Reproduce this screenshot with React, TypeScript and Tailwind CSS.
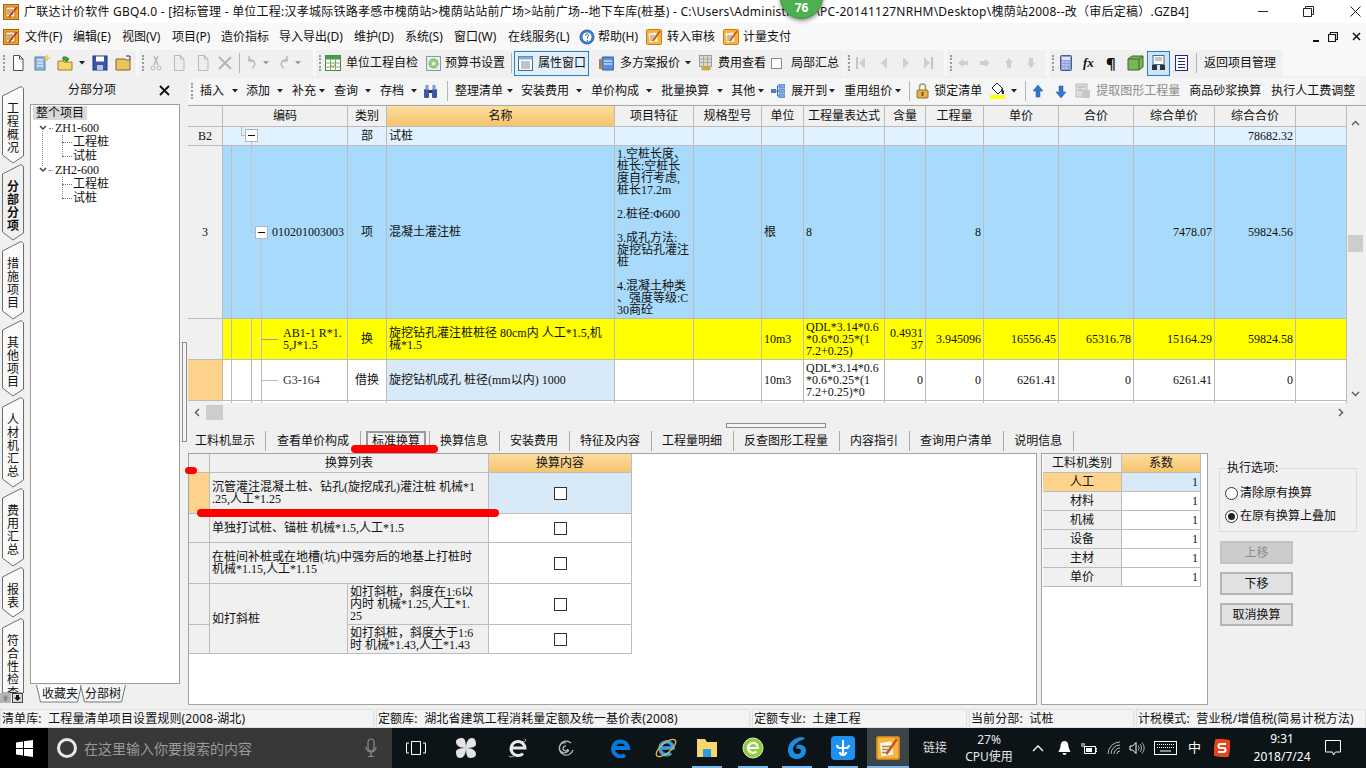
import { ReactNode } from "react";
import clsx from "clsx";

const line = "border-[#bcbcbc]";
const headBg = "bg-[#f0f0f0]";
const orangeHead = "bg-gradient-to-b from-[#fbdd9f] to-[#f5c36c]";

function Grip({ className }: { className?: string }) {
  return <span className={clsx("w-[2px] h-[16px] shrink-0 border-l-2 border-dotted border-[#9a9a9a]", className)} />;
}
function Sep({ className }: { className?: string }) {
  return <span className={clsx("w-px h-[20px] shrink-0 bg-[#b5b5b5]", className)} />;
}
function Arrow({ className }: { className?: string }) {
  return (
    <svg width="6" height="4" viewBox="0 0 6 4" className={clsx("shrink-0", className)}>
      <path d="M0 0H6L3 3.5Z" fill="#222" />
    </svg>
  );
}
function T({ className, children }: { className?: string; children: ReactNode }) {
  return <span className={clsx("shrink-0 whitespace-nowrap", className)}>{children}</span>;
}

/* ---- small bitmap-like icons ---- */
function AppIcon({ className }: { className?: string }) {
  return (
    <svg width="16" height="16" viewBox="0 0 16 16" className={clsx("shrink-0", className)}>
      <rect x="0.5" y="0.5" width="15" height="15" fill="#f0a32a" stroke="#a8601a" />
      <rect x="3" y="3" width="9" height="10" fill="#fff3d6" stroke="#b5762a" />
      <path d="M4 6h6M4 8h5M4 10h6" stroke="#a8601a" />
      <path d="M6 13 14 3" stroke="#c02a1a" strokeWidth="1.5" />
    </svg>
  );
}
function NoteIcon({ className, size = 16 }: { className?: string; size?: number }) {
  return (
    <svg width={size} height={size} viewBox="0 0 16 16" className={clsx("shrink-0", className)}>
      <rect x="0.5" y="0.5" width="15" height="15" rx="1" fill="#f4b53f" stroke="#c77f1e" />
      <rect x="3" y="4" width="8" height="9" fill="#fbf3dd" transform="rotate(-8 7 8)" />
      <path d="M4 7h6M4 9h6M4 11h4" stroke="#9b8a6a" />
      <path d="M7 12 14 2" stroke="#c8551c" strokeWidth="1.6" />
    </svg>
  );
}
function Doc({ className, gray }: { className?: string; gray?: boolean }) {
  const s = gray ? "#b9b9b9" : "#47525e";
  return (
    <svg width="14" height="16" viewBox="0 0 14 16" className={clsx("shrink-0", className)}>
      <path d="M2.5.5h6l3.5 3.500v11.500h-9.500z" fill={gray ? "#eeeeee" : "#fff"} stroke={s} />
      <path d="M8.500.5v3.500h3.500" fill="none" stroke={s} />
    </svg>
  );
}
function Ic({ w = 16, h = 16, className, children }: { w?: number; h?: number; className?: string; children: ReactNode }) {
  return (
    <svg width={w} height={h} viewBox={`0 0 ${w} ${h}`} className={clsx("shrink-0", className)}>
      {children}
    </svg>
  );
}
function TableIcon({ className }: { className?: string }) {
  return (
    <Ic className={className}>
      <rect x=".5" y=".5" width="15" height="15" fill="#fff" stroke="#3c8a3a" />
      <rect x=".5" y=".5" width="15" height="4" fill="#4f9a47" />
      <path d="M.5 8h15M.5 12h15M5.500 4v12M10.500 4v12" stroke="#7aa87a" />
      <path d="M6 10l2 2 3-4" stroke="#d08a1c" fill="none" />
    </Ic>
  );
}
function WinIcon({ className }: { className?: string }) {
  return (
    <Ic w={15} h={15} className={className}>
      <rect x=".5" y=".5" width="14" height="14" fill="#fff" stroke="#3a6f95" />
      <rect x=".5" y=".5" width="14" height="3" fill="#7fb1d8" />
      <path d="M3 6h9M3 8h9M3 10h9M3 12h9" stroke="#7c8b96" />
    </Ic>
  );
}

/* ---- top rows ---- */
function TitleBar() {
  return (
    <div className="h-[23px] bg-white flex items-center text-[12px] text-[#111] shrink-0">
      <AppIcon className="ml-[3px]" />
      <T className="ml-[5px] tracking-[0.24px]">
        广联达计价软件 GBQ4.0 - [招标管理 - 单位工程:汉孝城际铁路孝感市槐荫站&gt;槐荫站站前广场&gt;站前广场--地下车库(桩基) - C:\Users\Administrator\PC-20141127NRHM\Desktop\槐荫站2008--改（审后定稿）.GZB4]
      </T>
      <div className="ml-auto flex items-center">
        <span className="w-[10px] h-px bg-[#222] mr-[35px]" />
        <Ic w={11} h={11} className="mr-[36px]">
          <path d="M.5 2.500h8v8h-8zM2.500 2.500v-2h8v8h-2" fill="none" stroke="#222" />
        </Ic>
        <Ic w={11} h={11} className="mr-[5px]">
          <path d="M.5.5l10 10M10.500.5l-10 10" stroke="#222" />
        </Ic>
      </div>
    </div>
  );
}

const menus: [string, string][] = [
  ["文件(F)", "w-[48px]"],
  ["编辑(E)", "w-[49px]"],
  ["视图(V)", "w-[50px]"],
  ["项目(P)", "w-[49px]"],
  ["造价指标", "w-[58px]"],
  ["导入导出(D)", "w-[75px]"],
  ["维护(D)", "w-[51px]"],
  ["系统(S)", "w-[49px]"],
  ["窗口(W)", "w-[54px]"],
  ["在线服务(L)", "w-[71px]"],
];

function MenuBar() {
  return (
    <div className="h-[27px] bg-[#f8f8f8] flex items-center text-[12px] text-[#111] shrink-0">
      <AppIcon className="ml-[3px] mr-[6px]" />
      {menus.map(([m, w]) => (
        <T key={m} className={w}>
          {m}
        </T>
      ))}
      <Ic>
        <circle cx="8" cy="8" r="7" fill="#3f7fd0" stroke="#2a5ca8" />
        <circle cx="8" cy="8" r="4.500" fill="#fff" />
        <path d="M6.500 6.500a1.500 1.500 0 1 1 2 1.500v1.500M8.500 11v1" stroke="#2a5ca8" fill="none" />
      </Ic>
      <T className="ml-[3px] w-[48px]">帮助(H)</T>
      <NoteIcon />
      <T className="ml-[5px]">转入审核</T>
      <NoteIcon className="ml-[8px]" />
      <T className="ml-[4px]">计量支付</T>
      <div className="ml-auto flex items-center mr-[5px] gap-[9px]">
        <span className="w-[6px] h-[2px] bg-[#111] mt-[8px]" />
        <Ic w={10} h={10}>
          <path d="M.5 2.500h7v7h-7zM2.500 2.500v-2h7v7h-2" fill="none" stroke="#111" strokeWidth="1.200" />
        </Ic>
        <Ic w={9} h={9} className="ml-[5px]">
          <path d="M1 1l7 7M8 1l-7 7" stroke="#111" strokeWidth="1.500" />
        </Ic>
      </div>
    </div>
  );
}

function Toolbar1() {
  return (
    <div className="h-[26px] bg-[#f8f8f8] flex text-[12px] text-[#111] shrink-0">
      <div className="w-[136px] bg-[#f0f0f0] rounded-[2px] flex items-center">
        <Grip className="ml-[3px]" />
        <Doc className="ml-[6px]" />
        <Ic className="ml-[9px]">
          <rect x="1" y="2" width="10" height="13" fill="#8fb4e0" stroke="#5a7fae" />
          <path d="M3 5h6M3 8h6M3 11h6" stroke="#fff" />
          <path d="M13 0v6M10 3h6" stroke="#f0d040" strokeWidth="1.500" />
        </Ic>
        <Ic className="ml-[7px]">
          <path d="M1 6h5l1 1h8v8H1z" fill="#f3d76a" stroke="#9a8020" />
          <path d="M6 5V2h3l3 2-3 3V5z" fill="#42a83a" stroke="#2a7a22" />
        </Ic>
        <Arrow className="ml-[6px]" />
        <Ic className="ml-[7px]">
          <rect x="1" y="1" width="14" height="14" fill="#3a54b0" stroke="#22367e" />
          <rect x="4" y="1.500" width="8" height="5" fill="#fff" />
          <rect x="5" y="10" width="6" height="5" fill="#b8c4e0" />
        </Ic>
        <Ic className="ml-[7px]">
          <path d="M1 4h9l1 1h4v10H1z" fill="#e8c560" stroke="#7c6420" />
          <path d="M11 1h4v4" fill="none" stroke="#333" />
        </Ic>
      </div>
      <div className="ml-[3px] w-[174px] bg-[#f0f0f0] rounded-[2px] flex items-center">
        <Grip className="ml-[3px]" />
        <Ic w={12} className="ml-[6px]">
          <path d="M4 1l4 9M8 1L4 10" stroke="#b8b8b8" strokeWidth="1.500" />
          <circle cx="3" cy="13" r="2" fill="none" stroke="#b8b8b8" />
          <circle cx="9" cy="13" r="2" fill="none" stroke="#b8b8b8" />
        </Ic>
        <Doc gray className="ml-[10px]" />
        <Doc gray className="ml-[10px]" />
        <Ic w={14} h={14} className="ml-[8px]">
          <path d="M1 1l12 12M13 1L1 13" stroke="#b4b4b4" strokeWidth="2" />
        </Ic>
        <Sep className="ml-[7px]" />
        <Ic w={12} className="ml-[6px]">
          <path d="M3 5a4 4 0 1 1 3 8M3 1v5h5" fill="none" stroke="#b8b8b8" strokeWidth="1.500" />
        </Ic>
        <Arrow className="ml-[5px] opacity-40" />
        <Ic w={12} className="ml-[9px]">
          <path d="M9 5a4 4 0 1 0-3 8M9 1v5H4" fill="none" stroke="#b8b8b8" strokeWidth="1.500" />
        </Ic>
        <Arrow className="ml-[5px] opacity-40" />
      </div>
      <div className="ml-[3px] w-[528px] bg-[#f0f0f0] rounded-[2px] flex items-center">
        <Grip className="ml-[3px]" />
        <TableIcon className="ml-[4px]" />
        <T className="ml-[5px]">单位工程自检</T>
        <Ic w={15} h={15} className="ml-[8px]">
          <rect x=".5" y=".5" width="14" height="14" fill="#e6f0e0" stroke="#7aa0a8" />
          <circle cx="7.500" cy="7.500" r="4.500" fill="#9ccf8a" stroke="#5b9a58" strokeDasharray="2 1" />
          <circle cx="7.500" cy="7.500" r="1.500" fill="#fff" />
        </Ic>
        <T className="ml-[4px]">预算书设置</T>
        <Sep className="ml-[6px]" />
        <div className="ml-[2px] w-[75px] h-[25px] bg-[#e3f0fb] border border-[#1f83c9] flex items-center">
          <WinIcon className="ml-[3px]" />
          <T className="ml-[5px]">属性窗口</T>
        </div>
        <Ic w={15} h={15} className="ml-[10px]">
          <rect x="3" y="1" width="12" height="13" rx="1" fill="#5b8fe0" stroke="#2d5cab" />
          <path d="M5 5h8M5 8h8" stroke="#fff" />
          <path d="M1 3v10" stroke="#d23a2a" strokeWidth="1.500" />
          <path d="M3 3v10" stroke="#3aa83a" />
        </Ic>
        <T className="ml-[6px]">多方案报价</T>
        <Arrow className="ml-[5px]" />
        <Ic w={14} className="ml-[8px]">
          <rect x=".5" y=".5" width="12" height="11" fill="#e8dcae" stroke="#8ba0c0" />
          <path d="M.5 4h12M.5 7.500h12M4.500 0v12M8.500 0v12" stroke="#9aa8c0" />
          <ellipse cx="7" cy="13.500" rx="5" ry="2" fill="#d8a63a" />
        </Ic>
        <T className="ml-[5px]">费用查看</T>
        <span className="ml-[5px] w-[11px] h-[11px] border border-[#8a8a8a] bg-white shrink-0" />
        <T className="ml-[9px]">局部汇总</T>
      </div>
      <div className="ml-[1px] w-[99px] bg-[#f0f0f0] rounded-[2px] flex items-center">
        <Grip className="ml-[3px]" />
        <Ic w={10} h={14} className="ml-[6px]">
          <path d="M1 1v12" stroke="#c4c4c4" strokeWidth="2" />
          <path d="M9 1v12L3 7z" fill="#cfcfcf" />
        </Ic>
        <Ic w={8} h={14} className="ml-[14px]">
          <path d="M7 1v12L1 7z" fill="#cfcfcf" />
        </Ic>
        <Ic w={8} h={14} className="ml-[14px]">
          <path d="M1 1v12l6-6z" fill="#cfcfcf" />
        </Ic>
        <Ic w={10} h={14} className="ml-[13px]">
          <path d="M9 1v12" stroke="#c4c4c4" strokeWidth="2" />
          <path d="M1 1v12l6-6z" fill="#cfcfcf" />
        </Ic>
      </div>
      <div className="ml-[3px] w-[99px] bg-[#f0f0f0] rounded-[2px] flex items-center">
        <Grip className="ml-[3px]" />
        <Ic w={10} h={10} className="ml-[6px]">
          <path d="M0 5l5-4v2h5v4H5v2z" fill="#cfcfcf" />
        </Ic>
        <Ic w={10} h={10} className="ml-[12px]">
          <path d="M10 5L5 1v2H0v4h5v2z" fill="#cfcfcf" />
        </Ic>
        <Ic w={10} h={10} className="ml-[14px]">
          <path d="M5 0l4 5H7v5H3V5H1z" fill="#cfcfcf" />
        </Ic>
        <Ic w={10} h={10} className="ml-[12px]">
          <path d="M5 10l4-5H7V0H3v5H1z" fill="#cfcfcf" />
        </Ic>
      </div>
      <div className="ml-[3px] w-[234px] bg-[#f0f0f0] rounded-[2px] flex items-center">
        <Grip className="ml-[3px]" />
        <Ic w={12} className="ml-[6px]">
          <rect x=".5" y=".5" width="11" height="15" rx="1" fill="#8f9fd6" stroke="#4a5a95" />
          <rect x="2" y="2" width="8" height="3" fill="#dfe6f7" />
          <path d="M2.500 7h2M5.500 7h2M8.500 7h1M2.500 10h2M5.500 10h2M8.500 10h1M2.500 13h2M5.500 13h2" stroke="#eef" />
        </Ic>
        <T className="ml-[11px] w-[12px] font-['Liberation_Serif'] italic font-bold text-[13px]">fx</T>
        <T className="ml-[11px] w-[11px] font-bold text-[15px] leading-none">¶</T>
        <Ic w={17} className="ml-[10px]">
          <path d="M1 4l4-3h11v11l-4 3H1z" fill="#7bb55a" stroke="#3a6a2a" />
          <path d="M1 4h11v11M12 4l4-3" fill="none" stroke="#3a6a2a" />
        </Ic>
        <div className="ml-[3px] w-[23px] h-[25px] bg-[#cfe3f5] border border-[#1f83c9] flex items-center justify-center">
          <Ic w={15} h={16}>
            <rect x="2" y=".5" width="11" height="9" fill="#fff" stroke="#3a6f95" />
            <path d="M4 3h7M4 5h7" stroke="#7c8b96" />
            <rect x="1" y="10" width="5" height="5" fill="#333" />
            <rect x="9" y="10" width="5" height="5" fill="#333" />
          </Ic>
        </div>
        <Ic w={13} h={16} className="ml-[5px]">
          <rect x=".5" y=".5" width="12" height="15" fill="#fff" stroke="#1d2d7a" />
          <path d="M3 3.500h7M3 6.500h7M3 9.500h7M3 12.500h7" stroke="#1d2d7a" />
        </Ic>
        <Sep className="ml-[8px]" />
        <T className="ml-[7px]">返回项目管理</T>
      </div>
    </div>
  );
}

function Toolbar2() {
  return (
    <div className="mt-[2px] h-[26px] bg-[#f5f5f5] rounded-[2px] flex items-center text-[12px] text-[#111] shrink-0 mr-[6px]">
      <Grip className="ml-[3px]" />
      <T className="ml-[7px]">插入</T>
      <Arrow className="ml-[8px]" />
      <T className="ml-[8px]">添加</T>
      <Arrow className="ml-[7px]" />
      <T className="ml-[9px]">补充</T>
      <Arrow className="ml-[3px]" />
      <T className="ml-[9px]">查询</T>
      <Arrow className="ml-[7px]" />
      <T className="ml-[9px]">存档</T>
      <Arrow className="ml-[7px]" />
      <Ic w={15} h={15} className="ml-[6px]">
        <rect x="1" y="5" width="5" height="9" rx="1" fill="#3c5aa0" />
        <rect x="9" y="5" width="5" height="9" rx="1" fill="#3c5aa0" />
        <rect x="2.500" y="1" width="3" height="5" fill="#7f95c8" />
        <rect x="9.500" y="1" width="3" height="5" fill="#7f95c8" />
        <rect x="6" y="6" width="3" height="3" fill="#24386a" />
      </Ic>
      <Sep className="ml-[9px]" />
      <T className="ml-[7px]">整理清单</T>
      <Arrow className="ml-[4px]" />
      <T className="ml-[8px]">安装费用</T>
      <Arrow className="ml-[7px]" />
      <T className="ml-[9px]">单价构成</T>
      <Arrow className="ml-[7px]" />
      <T className="ml-[9px]">批量换算</T>
      <Arrow className="ml-[8px]" />
      <T className="ml-[8px]">其他</T>
      <Arrow className="ml-[3px]" />
      <Ic w={14} h={14} className="ml-[7px]">
        <rect x="0" y="5" width="5" height="4" fill="#4a7fc8" />
        <rect x="8" y="0" width="6" height="4" fill="#7fa8e0" stroke="#3a6ab0" strokeWidth=".5" />
        <rect x="8" y="5" width="6" height="4" fill="#7fa8e0" stroke="#3a6ab0" strokeWidth=".5" />
        <rect x="8" y="10" width="6" height="4" fill="#7fa8e0" stroke="#3a6ab0" strokeWidth=".5" />
        <path d="M5 7h3M6.500 2v10h1.500M6.500 2H8" stroke="#3a6ab0" fill="none" />
      </Ic>
      <T className="ml-[6px]">展开到</T>
      <Arrow className="ml-[2px]" />
      <T className="ml-[9px]">重用组价</T>
      <Arrow className="ml-[3px]" />
      <Sep className="ml-[8px]" />
      <Ic w={13} className="ml-[6px]">
        <path d="M3.500 7V4a3 3 0 0 1 6 0v3" fill="none" stroke="#a89a70" strokeWidth="1.500" />
        <rect x="1" y="7" width="11" height="8" rx="1" fill="#e4b24a" stroke="#96702a" />
        <rect x="5.500" y="9" width="2" height="4" fill="#7a5518" />
      </Ic>
      <T className="ml-[5px]">锁定清单</T>
      <Ic w={15} className="ml-[8px]">
        <path d="M7 0l6 6-5 5-6-6z" fill="#fff" stroke="#222" />
        <path d="M11 5l3 3v3h-2z" fill="#1d2d7a" />
        <rect x="0" y="12" width="15" height="4" fill="#ffff00" />
      </Ic>
      <Arrow className="ml-[6px]" />
      <Sep className="ml-[8px]" />
      <Ic w={12} h={13} className="ml-[6px]">
        <path d="M6 0l5 6H8v6H4V6H1z" fill="#2f79cc" stroke="#1f5aa0" strokeWidth=".5" />
      </Ic>
      <Ic w={12} h={13} className="ml-[11px]">
        <path d="M6 13l5-6H8V1H4v6H1z" fill="#2f79cc" stroke="#1f5aa0" strokeWidth=".5" />
      </Ic>
      <Ic className="ml-[8px]">
        <rect x="1" y="1" width="11" height="13" fill="#dcdcdc" stroke="#bdbdbd" />
        <path d="M7 7h8v8H7z" fill="#c8c8c8" />
        <path d="M3 4h7M3 7h4" stroke="#aaa" />
      </Ic>
      <T className="ml-[5px] text-[#8c8c8c]">提取图形工程量</T>
      <T className="ml-[9px]">商品砂浆换算</T>
      <T className="ml-[10px]">执行人工费调整</T>
    </div>
  );
}

/* ---- left side ---- */
const sideTabs = [
  { label: "工程概况", box: "h-[78px]", h: 78 },
  { label: "分部分项", box: "h-[77px]", h: 77, active: true },
  { label: "措施项目", box: "h-[79px]", h: 79 },
  { label: "其他项目", box: "h-[77px]", h: 77 },
  { label: "人材机汇总", box: "h-[91px]", h: 91 },
  { label: "费用汇总", box: "h-[79px]", h: 79 },
  { label: "报表", box: "h-[51px]", h: 51 },
  { label: "符合性检查", box: "h-[75px]", h: 75, last: true },
];

function SideTab({ label, box, h, active, last }: { label: string; box: string; h: number; active?: boolean; last?: boolean }) {
  return (
    <div className={clsx("relative w-[24px] shrink-0 overflow-hidden", box)}>
      <svg width="24" height={h} className="absolute inset-0">
        <path
          d={last ? `M2.500 10L21 .5l2.500 2V${h}H2.500Z` : `M2.500 10L21 .5l2.500 2V${h - 8}L13 ${h - 1}l-10.500-8Z`}
          fill={active ? "#f0f0f0" : "#fafafa"}
          stroke="#6e6e6e"
        />
      </svg>
      <div
        className={clsx(
          "absolute left-[7px] top-[16px] w-[12px] text-[12px] leading-[13px] text-[#111] flex flex-col items-center",
          active && "font-bold"
        )}
      >
        {label.split("").map((c, i) => (
          <span key={i} className="h-[13px]">
            {c}
          </span>
        ))}
      </div>
    </div>
  );
}

function TreeRow({ className, children }: { className?: string; children: ReactNode }) {
  return <div className={clsx("h-[14px] flex items-center text-[12px] text-[#111] whitespace-nowrap", className)}>{children}</div>;
}
function Leaf({ label }: { label: string }) {
  return (
    <TreeRow className="pl-[31px]">
      <span className="w-[10px] border-b border-dotted border-[#777] mr-[1px]" />
      {label}
    </TreeRow>
  );
}
function Chev() {
  return (
    <svg width="8" height="6" viewBox="0 0 8 6" className="shrink-0">
      <path d="M1 1l3 3 3-3" fill="none" stroke="#444" strokeWidth="1.500" />
    </svg>
  );
}

function LeftPanel() {
  return (
    <div className="w-[156px] shrink-0 flex flex-col">
      <div className="h-[28px] flex items-center relative text-[12px] text-[#111] shrink-0">
        <span className="ml-[44px]">分部分项</span>
        <svg width="11" height="11" viewBox="0 0 11 11" className="ml-[43px]">
          <path d="M1 1l9 9M10 1l-9 9" stroke="#111" strokeWidth="1.800" />
        </svg>
      </div>
      <div className="ml-[6px] w-[150px] h-[580px] bg-white border border-[#9c9c9c] pt-[1px] relative shrink-0">
        <div className="ml-[2px] w-fit h-[14px] px-[3px] bg-[#d9d9d9] text-[12px] leading-[14px] text-[#111]">整个项目</div>
        <TreeRow className="pl-[8px] font-['Liberation_Serif','Noto_Sans_CJK_SC',sans-serif] mt-[1px]">
          <Chev />
          <span className="w-[4px] border-b border-dotted border-[#777] mx-[2px]" />
          ZH1-600
        </TreeRow>
        <Leaf label="工程桩" />
        <Leaf label="试桩" />
        <TreeRow className="pl-[8px] font-['Liberation_Serif','Noto_Sans_CJK_SC',sans-serif]">
          <Chev />
          <span className="w-[4px] border-b border-dotted border-[#777] mx-[2px]" />
          ZH2-600
        </TreeRow>
        <Leaf label="工程桩" />
        <Leaf label="试桩" />
        <span className="absolute left-[11px] top-[26px] h-[35px] border-l border-dotted border-[#888]" />
        <span className="absolute left-[31px] top-[30px] h-[21px] border-l border-dotted border-[#888]" />
        <span className="absolute left-[31px] top-[72px] h-[21px] border-l border-dotted border-[#888]" />
      </div>
      <div className="flex ml-[12px] mt-[1px] text-[12px] text-[#111]">
        <div className="relative w-[46px] h-[18px]">
          <svg width="46" height="18" className="absolute inset-0">
            <path d="M.5 0l4 17h37l4-17" fill="#fff" stroke="#777" />
          </svg>
          <span className="absolute left-[6px] top-[1px] leading-[16px]">收藏夹</span>
        </div>
        <div className="relative w-[46px] h-[18px] -ml-[2px]">
          <svg width="46" height="18" className="absolute inset-0">
            <path d="M.5 0l4 17h37l4-17" fill="#f4f4f4" stroke="#777" />
          </svg>
          <span className="absolute left-[5px] top-[1px] leading-[16px]">分部树</span>
        </div>
      </div>
    </div>
  );
}

/* ---- main grid ---- */
const gridCols =
  "grid grid-cols-[35px_9px_20px_10px_86px_39px_228px_79px_68px_42px_81px_41px_58px_75px_75px_81px_81px_51px]";

function C({ className, children }: { className?: string; children?: ReactNode }) {
  return (
    <div className={clsx("border-r border-b flex items-center px-[2px] overflow-hidden min-w-0 leading-[12px]", line, className)}>
      {children}
    </div>
  );
}

function Box({ className }: { className?: string }) {
  return (
    <span className={clsx("absolute w-[13px] h-[13px] bg-white border border-[#b4b4b4] flex items-center justify-center", className)}>
      <span className="w-[7px] h-px bg-[#111]" />
    </span>
  );
}

const headers = ["项目特征", "规格型号", "单位", "工程量表达式", "含量", "工程量", "单价", "合价", "综合单价", "综合合价"];

function MainGrid() {
  const rowYellow = "bg-[#ffff00]";
  const rowBlue = "bg-[#a8dbfb]";
  const rowPale = "bg-[#e0f2ff]";
  return (
    <div className="mt-px h-[316px] border-t border-b border-[#a9a9a9] flex flex-col shrink-0 relative">
      <div className="h-[298px] flex shrink-0">
        <div className={clsx(gridCols, "w-[1159px] grid-rows-[21px_19px_173px_41px_41px_2px] text-[12px] text-[#111] font-['Liberation_Serif','Noto_Sans_CJK_SC',sans-serif]")}>
          {/* header */}
          <C className={headBg} />
          <C className={clsx(headBg, "col-span-4 justify-center")}>编码</C>
          <C className={clsx(headBg, "justify-center")}>类别</C>
          <C className={clsx(orangeHead, "justify-center")}>名称</C>
          {headers.map((h) => (
            <C key={h} className={clsx(headBg, "justify-center")}>
              {h}
            </C>
          ))}
          <C className={headBg} />

          {/* B2 */}
          <C className={clsx(headBg, "justify-center")}>B2</C>
          <C className={clsx(rowPale, "col-span-4 relative border-l-0")}>
            <span className="absolute left-[18px] top-0 h-[9px] border-l border-[#bcbcbc]" />
            <span className="absolute left-[18px] top-[8px] w-[5px] border-t border-[#bcbcbc]" />
            <Box className="left-[22px] top-[2px]" />
            <span className="absolute left-[28px] top-[15px] h-[4px] border-l border-[#bcbcbc]" />
          </C>
          <C className={clsx(rowPale, "justify-center")}>部</C>
          <C className={rowPale}>试桩</C>
          {Array.from({ length: 9 }).map((_, i) => (
            <C key={i} className={rowPale} />
          ))}
          <C className={clsx(rowPale, "justify-end")}>78682.32</C>
          <C className={rowPale} />

          {/* item */}
          <C className={clsx(headBg, "justify-center")}>3</C>
          <C className={rowBlue} />
          <C className={clsx(rowBlue, "col-span-3 relative")}>
            <span className="absolute left-[19px] top-0 h-[87px] border-l border-[#c4c4c4]" />
            <span className="absolute left-[19px] top-[86px] w-[5px] border-t border-[#c4c4c4]" />
            <Box className="left-[23px] top-[80px]" />
            <span className="absolute left-[29px] top-[93px] h-[80px] border-l border-[#c4c4c4]" />
            <span className="pl-[38px] whitespace-nowrap">010201003003</span>
          </C>
          <C className={clsx(rowBlue, "justify-center")}>项</C>
          <C className={rowBlue}>混凝土灌注桩</C>
          <C className={clsx(rowBlue, "items-start pt-[2px] whitespace-nowrap")}>
            <div>
              1.空桩长度、<br />
              桩长:空桩长<br />
              度自行考虑,<br />
              桩长17.2m<br />
              <br />
              2.桩径:Φ600<br />
              <br />
              3.成孔方法:<br />
              旋挖钻孔灌注<br />
              桩<br />
              <br />
              4.混凝土种类<br />
              、强度等级:C<br />
              30商砼
            </div>
          </C>
          <C className={rowBlue} />
          <C className={rowBlue}>根</C>
          <C className={rowBlue}>8</C>
          <C className={rowBlue} />
          <C className={clsx(rowBlue, "justify-end")}>8</C>
          <C className={rowBlue} />
          <C className={rowBlue} />
          <C className={clsx(rowBlue, "justify-end")}>7478.07</C>
          <C className={clsx(rowBlue, "justify-end")}>59824.56</C>
          <C className={rowBlue} />

          {/* yellow */}
          <C className={headBg} />
          <C className={rowYellow} />
          <C className={rowYellow} />
          <C className={rowYellow} />
          <C className={clsx(rowYellow, "relative pl-[21px] whitespace-nowrap")}>
            <span className="absolute left-0 top-[20px] w-[16px] border-t border-[#9c9c9c]" />
            <div>
              AB1-1 R*1.<br />
              5,J*1.5
            </div>
          </C>
          <C className={clsx(rowYellow, "justify-center")}>换</C>
          <C className={clsx(rowYellow, "whitespace-nowrap")}>
            <div>
              旋挖钻孔灌注桩桩径 80cm内 人工*1.5,机<br />
              械*1.5
            </div>
          </C>
          <C className={rowYellow} />
          <C className={rowYellow} />
          <C className={rowYellow}>10m3</C>
          <C className={clsx(rowYellow, "whitespace-nowrap")}>
            <div>
              QDL*3.14*0.6<br />
              *0.6*0.25*(1<br />
              7.2+0.25)
            </div>
          </C>
          <C className={clsx(rowYellow, "justify-end text-right whitespace-nowrap")}>
            <div>
              0.4931<br />
              37
            </div>
          </C>
          <C className={clsx(rowYellow, "justify-end")}>3.945096</C>
          <C className={clsx(rowYellow, "justify-end")}>16556.45</C>
          <C className={clsx(rowYellow, "justify-end")}>65316.78</C>
          <C className={clsx(rowYellow, "justify-end")}>15164.29</C>
          <C className={clsx(rowYellow, "justify-end")}>59824.58</C>
          <C className={rowYellow} />

          {/* white */}
          <C className="bg-[#fdd28a]" />
          <C className="bg-white" />
          <C className="bg-white" />
          <C className="bg-white" />
          <C className="bg-white relative pl-[21px] whitespace-nowrap text-[#333]">
            <span className="absolute left-0 top-[20px] w-[16px] border-t border-[#bcbcbc]" />
            G3-164
          </C>
          <C className="bg-white justify-center">借换</C>
          <C className="bg-[#d8e9f8] whitespace-nowrap">旋挖钻机成孔 桩径(mm以内) 1000</C>
          <C className="bg-white" />
          <C className="bg-white" />
          <C className="bg-white">10m3</C>
          <C className="bg-white whitespace-nowrap">
            <div>
              QDL*3.14*0.6<br />
              *0.6*0.25*(1<br />
              7.2+0.25)*0
            </div>
          </C>
          <C className="bg-white justify-end">0</C>
          <C className="bg-white justify-end">0</C>
          <C className="bg-white justify-end">6261.41</C>
          <C className="bg-white justify-end">0</C>
          <C className="bg-white justify-end">6261.41</C>
          <C className="bg-white justify-end">0</C>
          <C className="bg-white" />

          {/* next row peeking out */}
          {Array.from({ length: 18 }).map((_, i) =>
            i === 0 ? (
              <div key={i} className="bg-[#f0f0f0]" />
            ) : (
              <div key={i} className={clsx("border-r bg-white", line)} />
            )
          )}
        </div>
        {/* vertical scrollbar */}
        <div className="w-[17px] bg-[#f0f0f0] flex flex-col items-center relative shrink-0">
          <svg width="9" height="6" viewBox="0 0 9 6" className="mt-[14px] shrink-0">
            <path d="M1 5l3.500-3.500L8 5" fill="none" stroke="#606060" strokeWidth="1.500" />
          </svg>
          <span className="mt-[109px] w-[15px] h-[17px] bg-[#cdcdcd] shrink-0" />
          <svg width="9" height="6" viewBox="0 0 9 6" className="mt-[139px] shrink-0">
            <path d="M1 1l3.500 3.500L8 1" fill="none" stroke="#606060" strokeWidth="1.500" />
          </svg>
        </div>
      </div>
      {/* horizontal scrollbar */}
      <div className="h-[17px] bg-[#f0f0f0] flex items-center shrink-0">
        <svg width="6" height="9" viewBox="0 0 6 9" className="ml-[6px]">
          <path d="M5 1L1.500 4.500 5 8" fill="none" stroke="#606060" strokeWidth="1.500" />
        </svg>
        <span className="ml-[6px] w-[17px] h-[15px] bg-[#cdcdcd]" />
        <svg width="6" height="9" viewBox="0 0 6 9" className="ml-auto mr-[22px]">
          <path d="M1 1l3.500 3.500L1 8" fill="none" stroke="#606060" strokeWidth="1.500" />
        </svg>
      </div>
    </div>
  );
}

/* ---- lower part ---- */
const tabs = ["换算信息", "安装费用", "特征及内容", "工程量明细", "反查图形工程量", "内容指引", "查询用户清单", "说明信息"];

function TabStrip() {
  const item = "h-[20px] flex items-center border-r border-[#a8a8a8] shrink-0 whitespace-nowrap pl-[10px] pr-[11px]";
  return (
    <div className="h-[23px] flex items-start text-[12px] text-[#111] pt-px shrink-0">
      <span className={clsx(item, "ml-[7px] !pl-0 w-[71px]")}>工料机显示</span>
      <span className={clsx(item, "!pl-[11px]")}>查看单价构成</span>
      <span className="ml-[5px] h-[18px] w-[60px] border-2 border-b-0 border-[#9a9a9a] flex items-center justify-center shrink-0 whitespace-nowrap">
        标准换算
      </span>
      <span className="ml-[3px] h-[20px] border-r border-[#a8a8a8] shrink-0" />
      {tabs.map((t) => (
        <span key={t} className={item}>
          {t}
        </span>
      ))}
    </div>
  );
}

function Check() {
  return <span className="w-[13px] h-[13px] border border-[#333] bg-white" />;
}

function ConvTable() {
  const c = clsx("border-r border-b flex items-center px-[2px] leading-[12px] overflow-hidden whitespace-nowrap", line);
  const content = clsx(c, "justify-center bg-white");
  return (
    <div className="grid grid-cols-[21px_138px_141px_143px] grid-rows-[19px_41px_29px_41px_41px_29px] w-[443px] text-[12px] text-[#111] font-['Liberation_Serif','Noto_Sans_CJK_SC',sans-serif]">
      <div className={clsx(c, headBg)} />
      <div className={clsx(c, headBg, "col-span-2 justify-center")}>换算列表</div>
      <div className={clsx(c, orangeHead, "justify-center")}>换算内容</div>

      <div className={clsx(c, "bg-[#fdd28a]")} />
      <div className={clsx(c, headBg, "col-span-2")}>
        <div>
          沉管灌注混凝土桩、钻孔(旋挖成孔)灌注桩 机械*1<br />
          .25,人工*1.25
        </div>
      </div>
      <div className={clsx(content, "!bg-[#d8e9f8]")}>
        <Check />
      </div>

      <div className={clsx(c, headBg)} />
      <div className={clsx(c, headBg, "col-span-2")}>单独打试桩、锚桩 机械*1.5,人工*1.5</div>
      <div className={content}>
        <Check />
      </div>

      <div className={clsx(c, headBg)} />
      <div className={clsx(c, headBg, "col-span-2")}>
        <div>
          在桩间补桩或在地槽(坑)中强夯后的地基上打桩时<br />
          机械*1.15,人工*1.15
        </div>
      </div>
      <div className={content}>
        <Check />
      </div>

      <div className={clsx(c, headBg)} />
      <div className={clsx(c, headBg, "row-span-2")}>如打斜桩</div>
      <div className={clsx(c, headBg)}>
        <div>
          如打斜桩，斜度在1:6以<br />
          内时 机械*1.25,人工*1.<br />
          25
        </div>
      </div>
      <div className={content}>
        <Check />
      </div>

      <div className={clsx(c, headBg)} />
      <div className={clsx(c, headBg)}>
        <div>
          如打斜桩，斜度大于1:6<br />
          时 机械*1.43,人工*1.43
        </div>
      </div>
      <div className={content}>
        <Check />
      </div>
    </div>
  );
}

const factors = ["人工", "材料", "机械", "设备", "主材", "单价"];

function FactorTable() {
  const c = clsx("border-r border-b flex items-center", line);
  return (
    <div className="grid grid-cols-[79px_79px] auto-rows-[19px] w-[158px] ml-px text-[12px] text-[#111]">
      <div className={clsx(c, headBg, "justify-center")}>工料机类别</div>
      <div className={clsx(c, orangeHead, "justify-center")}>系数</div>
      {factors.map((f, i) => (
        <div key={f} className="contents">
          <div className={clsx(c, "justify-center", i === 0 ? "bg-[#fdd28a]" : headBg)}>{f}</div>
          <div className={clsx(c, "justify-end pr-[2px] font-['Liberation_Serif']", i === 0 ? "bg-[#d8e9f8]" : "bg-white")}>1</div>
        </div>
      ))}
    </div>
  );
}

function Radio({ on, label }: { on?: boolean; label: string }) {
  return (
    <div className="flex items-center h-[14px] pl-[5px]">
      <span className="w-[13px] h-[13px] rounded-full border border-[#333] bg-white flex items-center justify-center shrink-0">
        {on && <span className="w-[7px] h-[7px] rounded-full bg-[#222]" />}
      </span>
      <span className="ml-[2px] whitespace-nowrap">{label}</span>
    </div>
  );
}

function Options() {
  const btn = "w-[73px] h-[23px] border-2 flex items-center justify-center";
  return (
    <div className="ml-[11px] w-[138px] text-[12px] text-[#111] shrink-0">
      <fieldset className="mt-[8px] h-[71px] border border-[#dcdcdc] pt-[11px]">
        <legend className="ml-[6px] px-[1px] leading-[14px]">执行选项:</legend>
        <div className="flex flex-col gap-[9px]">
          <Radio label="清除原有换算" />
          <Radio on label="在原有换算上叠加" />
        </div>
      </fieldset>
      <div className="mt-[9px] ml-px flex flex-col gap-[8px]">
        <div className={clsx(btn, "bg-[#cccccc] border-[#c2c2c2] text-[#8c8c8c]")}>上移</div>
        <div className={clsx(btn, "bg-[#e1e1e1] border-[#b4b4b4]")}>下移</div>
        <div className={clsx(btn, "bg-[#e1e1e1] border-[#b4b4b4]")}>取消换算</div>
      </div>
    </div>
  );
}

function RightPanel() {
  return (
    <div className="flex-1 min-w-0 flex flex-col">
      <Toolbar2 />
      <MainGrid />
      <div className="h-[9px] flex items-start pl-[538px] shrink-0">
        <span className="mt-[2px] w-[100px] h-[5px] border border-[#8e8e8e] bg-[#f4f4f4]" />
      </div>
      <TabStrip />
      <div className="flex h-[252px] shrink-0">
        <div className="w-[849px] border border-[#a3a3a3] bg-white shrink-0">
          <ConvTable />
        </div>
        <div className="ml-[4px] w-[167px] border border-[#a3a3a3] bg-white shrink-0">
          <FactorTable />
        </div>
        <Options />
      </div>
    </div>
  );
}

/* ---- status + taskbar ---- */
function Status() {
  const cell = "h-[19px] mt-px bg-[#f4f4f4] border border-[#e0e0e0] flex items-center pl-[1px] whitespace-nowrap shrink-0 tracking-[0.12px]";
  return (
    <div className="h-[20px] bg-[#f0f0f0] flex gap-[2px] text-[12px] text-[#111] shrink-0 overflow-hidden">
      <div className={clsx(cell, "w-[374px]")}>清单库:&nbsp;&nbsp;工程量清单项目设置规则(2008-湖北)</div>
      <div className={clsx(cell, "w-[374px]")}>定额库:&nbsp;&nbsp;湖北省建筑工程消耗量定额及统一基价表(2008)</div>
      <div className={clsx(cell, "w-[215px]")}>定额专业:&nbsp;&nbsp;土建工程</div>
      <div className={clsx(cell, "w-[165px]")}>当前分部:&nbsp;&nbsp;试桩</div>
      <div className={clsx(cell, "w-[230px]")}>计税模式:&nbsp;&nbsp;营业税/增值税(简易计税方法)</div>
    </div>
  );
}

function Pin({ active, className, children }: { active?: boolean; className?: string; children: ReactNode }) {
  return (
    <div className={clsx("relative w-[42px] h-[40px] flex items-center justify-center shrink-0", active && "bg-[#3d4448]", className)}>
      {children}
      <span className={clsx("absolute left-0 right-0 bottom-0 h-[2px] bg-[#76b9ed]", active ? "" : "mx-[3px]")} />
    </div>
  );
}

function Taskbar() {
  return (
    <div className="h-[40px] bg-[#0c1418] flex items-center text-white shrink-0">
      <div className="w-[48px] h-full bg-black flex items-center justify-center shrink-0">
        <svg width="17" height="17" viewBox="0 0 17 17">
          <path d="M0 2.500l7-1v6.500H0zM8 1.300L17 0v8H8zM0 9h7v6.500l-7-1zM8 9h9v8l-9-1.300z" fill="#fff" />
        </svg>
      </div>
      <div className="w-[344px] h-full bg-[#383838] flex items-center shrink-0">
        <span className="ml-[9px] w-[20px] h-[20px] rounded-full border-[3px] border-[#e8e8e8] shrink-0" />
        <span className="ml-[7px] text-[14px] text-[#9a9a9a] whitespace-nowrap">在这里输入你要搜索的内容</span>
        <svg width="12" height="20" viewBox="0 0 12 20" className="ml-[113px]">
          <rect x="3" y="1" width="6" height="12" rx="3" fill="none" stroke="#8a8a8a" strokeWidth="1.200" />
          <path d="M1 9a5 5 0 0 0 10 0M6 14v4M3 18.500h6" fill="none" stroke="#8a8a8a" strokeWidth="1.200" />
        </svg>
      </div>
      <svg width="20" height="16" viewBox="0 0 20 16" className="ml-[14px] shrink-0">
        <path d="M5.500 1.500h9v13h-9zM3 3H.5v10H3M17 3h2.500v10H17" fill="none" stroke="#fff" />
      </svg>
      <svg width="22" height="22" viewBox="0 0 22 22" className="ml-[29px] shrink-0">
        <path d="M11 11C4 11 1 8 1 5s3-4 6-4 4 4 4 10zM11 11c0-7 3-10 6-10s4 3 4 6-4 4-10 4zM11 11c7 0 10 3 10 6s-3 4-6 4-4-4-4-10zM11 11c0 7-3 10-6 10s-4-3-4-6 4-4 10-4z" fill="#e4e4e4" />
      </svg>
      <svg width="22" height="22" viewBox="0 0 22 22" className="ml-[30px] shrink-0">
        <path d="M4 11h14a7 7 0 1 0-2 5.500" fill="none" stroke="#e8e8e8" strokeWidth="3" />
        <path d="M18 2C20 3 17 6 15 4.500M2 19c2 2 5 0 6-1" fill="none" stroke="#d8d8d8" />
      </svg>
      <svg width="20" height="20" viewBox="0 0 20 20" className="ml-[27px] shrink-0">
        <path d="M15 5a7 7 0 1 0 2 7M10 5a5 5 0 1 0 3 7M10 8a2.500 2.500 0 1 0 2 3" fill="none" stroke="#b8b8b8" strokeWidth="1.300" />
      </svg>
      <svg width="20" height="20" viewBox="0 0 20 20" className="ml-[35px] shrink-0">
        <path d="M3 10h14a7.500 7.500 0 1 0-3 7" fill="none" stroke="#0a78d7" strokeWidth="4" />
      </svg>
      <svg width="24" height="24" viewBox="0 0 24 24" className="ml-[23px] shrink-0">
        <path d="M6 12h13a6.500 6.500 0 1 0-2 5" fill="none" stroke="#3aa0e6" strokeWidth="3.500" />
        <ellipse cx="12" cy="12" rx="12" ry="5" fill="none" stroke="#e8b93a" strokeWidth="1.300" transform="rotate(-40 12 12)" />
      </svg>
      <Pin className="ml-[11px] !w-[36px]">
        <svg width="22" height="20" viewBox="0 0 22 20">
          <path d="M1 1h8l2 3h10v15H1z" fill="#f5d76e" />
          <path d="M7 11h8v8H7z" fill="#2c9be0" />
        </svg>
      </Pin>
      <Pin className="ml-[10px] !w-[36px]">
        <svg width="22" height="22" viewBox="0 0 22 22">
          <circle cx="11" cy="11" r="10" fill="#8fcf3a" stroke="#d9efb5" />
          <path d="M6 11h10a5 5 0 1 0-1.500 3.500" fill="none" stroke="#fff" strokeWidth="2.200" />
        </svg>
      </Pin>
      <Pin className="ml-[8px] !w-[36px]">
        <svg width="22" height="24" viewBox="0 0 22 24">
          <path d="M17 1C8 1 2 7 2 14s5 9 9 9 9-3 9-8-4-7-9-6l-1 4c3-1 5 0 5 2s-2 3-4 3-4-2-4-5 4-8 12-10z" fill="#1b8de0" />
        </svg>
      </Pin>
      <Pin className="ml-[10px] !w-[36px]">
        <svg width="24" height="24" viewBox="0 0 24 24">
          <rect width="24" height="24" rx="4" fill="#1f8ff0" />
          <path d="M12 4v16M6 9a3 3 0 0 0 3 3h6a3 3 0 0 0 3-3M9 16a3 3 0 0 0 6 0" fill="none" stroke="#fff" strokeWidth="2" />
        </svg>
      </Pin>
      <Pin active className="ml-[6px]">
        <NoteIcon size={24} />
      </Pin>
      <span className="ml-[14px] text-[12px] text-[#dcdcdc] whitespace-nowrap">链接</span>
      <div className="ml-[18px] w-[48px] text-[12px] leading-[17px] text-center text-[#e8e8e8] shrink-0">
        27%
        <br />
        <span className="whitespace-nowrap">CPU使用</span>
      </div>
      <svg width="12" height="8" viewBox="0 0 12 8" className="ml-[19px] shrink-0">
        <path d="M1 7l5-5 5 5" fill="none" stroke="#fff" strokeWidth="1.300" />
      </svg>
      <svg width="13" height="15" viewBox="0 0 13 15" className="ml-[14px] shrink-0">
        <path d="M6.500 0c3 0 4 3 4 6l2 5H.5l2-5c0-3 1-6 4-6zM4.500 12h4a2 2 0 0 1-4 0z" fill="#fff" />
      </svg>
      <svg width="16" height="13" viewBox="0 0 16 13" className="ml-[10px] shrink-0">
        <path d="M3.500 4.500h11v7h-11zM14.500 6.500h1.500v3h-1.500" fill="none" stroke="#fff" />
        <rect x="5" y="6" width="6" height="4" fill="#fff" />
        <path d="M1 1v4M3 1v4" stroke="#fff" />
      </svg>
      <svg width="15" height="14" viewBox="0 0 15 14" className="ml-[10px] shrink-0">
        <path d="M1 13a12 12 0 0 1 12-12M4 13a9 9 0 0 1 9-9M7 13a6 6 0 0 1 6-6M10 13a3 3 0 0 1 3-3" fill="none" stroke="#b8b8b8" />
      </svg>
      <svg width="16" height="14" viewBox="0 0 16 14" className="ml-[7px] shrink-0">
        <path d="M1 5h2.500L7 1.500v11L3.500 9H1z" fill="none" stroke="#fff" />
        <path d="M9 4.500a3.500 3.500 0 0 1 0 5M11 3a6 6 0 0 1 0 8M13 1.500a8 8 0 0 1 0 11" fill="none" stroke="#aaa" />
      </svg>
      <svg width="23" height="14" viewBox="0 0 23 14" className="ml-[9px] shrink-0">
        <rect x=".5" y=".5" width="22" height="13" fill="none" stroke="#fff" />
        <path d="M3 3.500h17M3 6.500h17" stroke="#fff" strokeDasharray="1 1" />
        <path d="M6 10h11" stroke="#fff" />
      </svg>
      <span className="ml-[11px] text-[13px] whitespace-nowrap">中</span>
      <svg width="16" height="18" viewBox="0 0 16 18" className="ml-[13px] shrink-0">
        <rect width="16" height="18" rx="3" fill="#e8451f" transform="rotate(8 8 9)" />
        <path d="M12 5H6.500a2 2 0 0 0 0 4h3a2 2 0 0 1 0 4H4" fill="none" stroke="#fff" strokeWidth="2" />
      </svg>
      <div className="ml-[19px] w-[66px] text-[12px] leading-[18px] text-center shrink-0">
        9:31
        <br />
        <span className="whitespace-nowrap">2018/7/24</span>
      </div>
      <svg width="16" height="16" viewBox="0 0 16 16" className="ml-[10px] shrink-0">
        <path d="M.5.5h15v11.500h-5l-2 3-1-3h-7z" fill="none" stroke="#fff" />
      </svg>
    </div>
  );
}

export default function App() {
  return (
    <div className="relative w-[1366px] h-[768px] overflow-hidden flex flex-col bg-[#f0f0f0] font-['Noto_Sans','Noto_Sans_CJK_SC',sans-serif]">
      <TitleBar />
      <MenuBar />
      <Toolbar1 />
      <div className="h-[632px] flex shrink-0">
        <div className="w-[24px] flex flex-col shrink-0 pt-[10px]">
          {sideTabs.map((t) => (
            <SideTab key={t.label} {...t} />
          ))}
          <div className="mt-auto mb-[5px] flex w-[24px] h-[10px]">
            <span className="w-[11px] h-[10px] bg-[#b4b4b4] flex items-center justify-center">
              <svg width="7" height="6" viewBox="0 0 7 6">
                <path d="M3.500 0L7 3.500H5V6H2V3.500H0z" fill="#8c8c8c" />
              </svg>
            </span>
            <span className="ml-px w-[11px] h-[10px] bg-[#d8d8d8] border border-[#444] flex items-center justify-center">
              <svg width="7" height="6" viewBox="0 0 7 6">
                <path d="M3.500 6L7 2.500H5V0H2v2.500H0z" fill="#111" />
              </svg>
            </span>
          </div>
        </div>
        <LeftPanel />
        <div className="w-[8px] flex items-center justify-center shrink-0">
          <span className="w-[5px] h-[100px] border border-[#8e8e8e] bg-[#f4f4f4]" />
        </div>
        <RightPanel />
      </div>
      <Status />
      <Taskbar />

      {/* green speed badge poking in at the top */}
      <div className="absolute left-[780px] -top-[24px] w-[43px] h-[43px] rounded-full bg-[#4caf50] border border-[#3c9a40] shadow-[0_2px_4px_rgba(0,0,0,0.45)] flex items-end justify-center pb-[3px] text-[12px] leading-[14px] font-bold text-white">
        76
      </div>

      {/* red pen marks drawn over the screenshot */}
      <span className="absolute left-[351px] top-[445px] w-[87px] h-[8px] rounded-full bg-[#ff0000]" />
      <span className="absolute left-[185px] top-[467px] w-[12px] h-[7px] rounded-full bg-[#ff0000]" />
      <span className="absolute left-[197px] top-[509px] w-[302px] h-[8px] rounded-full bg-[#ff0000]" />
    </div>
  );
}
